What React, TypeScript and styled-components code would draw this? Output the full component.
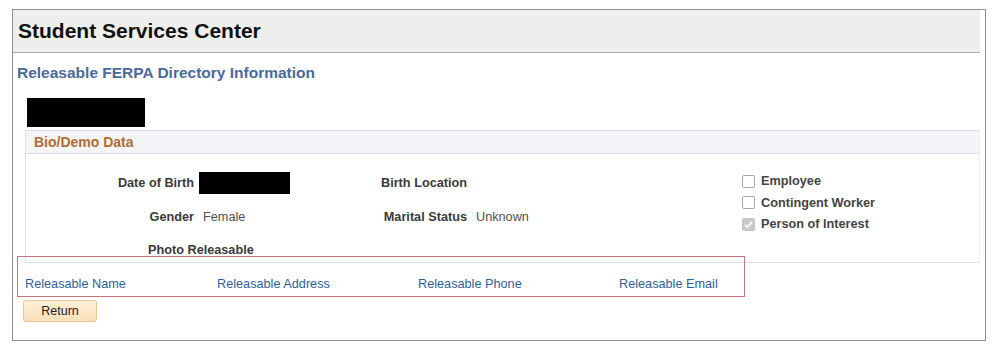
import React from "react";
import styled, { createGlobalStyle } from "styled-components";

const GlobalStyle = createGlobalStyle`
  * { box-sizing: border-box; }
  html, body { margin: 0; padding: 0; background: #ffffff; }
  body { font-family: "Liberation Sans", Arial, sans-serif; }
`;

const Page = styled.div`
  padding: 9px 0 0 12px;
`;

const Frame = styled.div`
  width: 974px;
  height: 332px;
  border: 1px solid #8e8e8e;
  background: #fff;
`;

const Header = styled.div`
  height: 43px;
  margin-right: 5px;
  background: #eeeeec;
  border-bottom: 1px solid #a9a9a9;
  display: flex;
  align-items: center;
  padding-left: 5px;
`;

const Title = styled.h1`
  margin: 0;
  font-size: 21px;
  font-weight: bold;
  color: #111;
  line-height: 24px;
`;

const PageTitle = styled.h2`
  margin: 11px 0 0 4px;
  font-size: 15.5px;
  line-height: 18px;
  font-weight: bold;
  color: #4a6a9b;
`;

const Redacted = styled.div<{ $w: number; $h: number }>`
  width: ${(p) => p.$w}px;
  height: ${(p) => p.$h}px;
  background: #000;
`;

const NameBlock = styled(Redacted)`
  margin: 15.5px 0 0 14px;
`;

const Section = styled.section`
  margin: 3.5px 5px 0 12px;
  border: 1px solid #dcdfe3;
  border-right-color: #eef0f2;
`;

const SectionHeader = styled.div`
  height: 23px;
  background: #f3f5f8;
  border-bottom: 1px solid #d7dde5;
  display: flex;
  align-items: center;
  padding-left: 8px;
  font-size: 14px;
  font-weight: bold;
  color: #b06d34;
`;

const SectionBody = styled.div`
  height: 108px;
  display: grid;
  grid-template-columns: 304px 412px 1fr;
  align-items: start;
`;

const FieldGrid = styled.div<{ $labelWidth: number; $gap: number }>`
  display: grid;
  grid-template-columns: ${(p) => p.$labelWidth}px auto;
  column-gap: ${(p) => p.$gap}px;
  row-gap: 17.5px;
  grid-auto-rows: 16px;
  padding-top: 21px;
  align-items: center;
  justify-items: start;
`;

const Label = styled.span`
  justify-self: end;
  font-size: 12.7px;
  line-height: 16px;
  font-weight: bold;
  color: #3a3a3a;
  white-space: nowrap;
`;

const Value = styled.span`
  font-size: 12.7px;
  line-height: 16px;
  color: #505050;
  padding-left: 4px;
  white-space: nowrap;
`;

const InlineRedacted = styled(Redacted)`
  margin: -3px 0;
`;

const WideLabel = styled(Label)`
  grid-column: 1 / -1;
  justify-self: start;
  padding-left: 122px;
`;

const CheckList = styled.div`
  padding-top: 19px;
  display: flex;
  flex-direction: column;
  gap: 5.5px;
`;

const CheckRow = styled.label`
  display: flex;
  align-items: center;
  gap: 6px;
  height: 16px;
  font-size: 12.7px;
  font-weight: bold;
  color: #444;
`;

const Box = styled.span<{ $checked?: boolean }>`
  width: 13px;
  height: 13px;
  border: 1px solid ${(p) => (p.$checked ? "#c4c4c4" : "#a8a8a8")};
  border-radius: 2px;
  background: ${(p) => (p.$checked ? "#cacaca" : "#fff")};
  display: flex;
  align-items: center;
  justify-content: center;
`;

const LinksRow = styled.div`
  position: relative;
  margin-top: 13px;
  padding-left: 12px;
  display: grid;
  grid-template-columns: 192px 201px 201px auto;
  height: 16px;
`;

const Highlight = styled.div`
  position: absolute;
  top: -20px;
  left: 4px;
  width: 728px;
  height: 41px;
  border: 1.5px solid #c9737d;
  pointer-events: none;
`;

const Link = styled.a`
  font-size: 12.7px;
  line-height: 16px;
  color: #2d5f9e;
  text-decoration: none;
  cursor: pointer;
  white-space: nowrap;
`;

const ReturnButton = styled.button`
  margin: 8px 0 0 10px;
  width: 74px;
  height: 22px;
  padding: 0;
  border: 1px solid #e6c896;
  border-radius: 3px;
  background: linear-gradient(#fdefd9, #fae0b8);
  font-family: "Liberation Sans", Arial, sans-serif;
  font-size: 12.5px;
  color: #222;
  display: block;
`;

const Check = () => (
  <svg width="11" height="11" viewBox="0 0 11 11">
    <path d="M2 5.8 L4.3 8.2 L9 2.8" fill="none" stroke="#f4f4f4" strokeWidth="1.8" />
  </svg>
);

export default function App() {
  return (
    <>
      <GlobalStyle />
      <Page>
        <Frame>
          <Header>
            <Title>Student Services Center</Title>
          </Header>
          <PageTitle>Releasable FERPA Directory Information</PageTitle>
          <NameBlock $w={118} $h={29} />
          <Section>
            <SectionHeader>Bio/Demo Data</SectionHeader>
            <SectionBody>
              <FieldGrid $labelWidth={168} $gap={5}>
                <Label>Date of Birth</Label>
                <InlineRedacted $w={91} $h={22} />
                <Label>Gender</Label>
                <Value>Female</Value>
                <WideLabel>Photo Releasable</WideLabel>
              </FieldGrid>
              <FieldGrid $labelWidth={137} $gap={5}>
                <Label>Birth Location</Label>
                <Value></Value>
                <Label>Marital Status</Label>
                <Value>Unknown</Value>
              </FieldGrid>
              <CheckList>
                <CheckRow>
                  <Box />
                  Employee
                </CheckRow>
                <CheckRow>
                  <Box />
                  Contingent Worker
                </CheckRow>
                <CheckRow>
                  <Box $checked>
                    <Check />
                  </Box>
                  Person of Interest
                </CheckRow>
              </CheckList>
            </SectionBody>
          </Section>
          <LinksRow>
            <Link>Releasable Name</Link>
            <Link>Releasable Address</Link>
            <Link>Releasable Phone</Link>
            <Link>Releasable Email</Link>
            <Highlight />
          </LinksRow>
          <ReturnButton>Return</ReturnButton>
        </Frame>
      </Page>
    </>
  );
}
